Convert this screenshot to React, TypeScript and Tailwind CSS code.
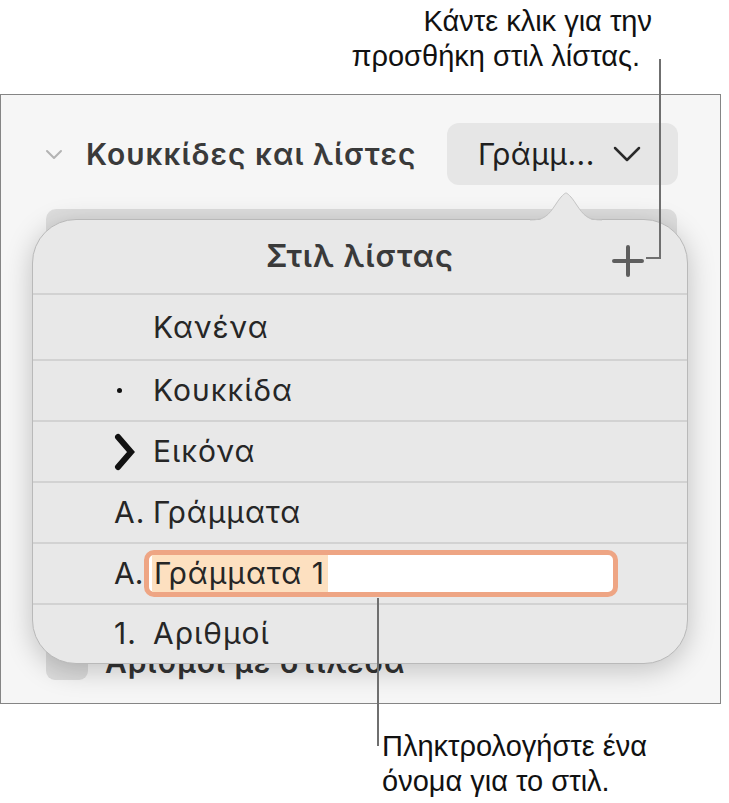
import React from 'react';

type ListStyle = {
  label: string;
  marker: React.ReactNode;
  height: string;
};

const ChevronMarker = () => (
  <svg width="22" height="38" viewBox="0 0 22 38" className="block">
    <path d="M4 4 L17 19 L4 34" fill="none" stroke="#111" strokeWidth="6" strokeLinejoin="miter" strokeLinecap="round" />
  </svg>
);

const rows: ListStyle[] = [
  { label: 'Κανένα', marker: null, height: 'h-[66px]' },
  { label: 'Κουκκίδα', marker: <span className="ml-[3px] block h-[5px] w-[5px] rounded-full bg-[#111]" />, height: 'h-[61px]' },
  { label: 'Εικόνα', marker: <ChevronMarker />, height: 'h-[61px]' },
  { label: 'Γράμματα', marker: <span>Α.</span>, height: 'h-[61px]' },
];

const ListStylePopover = () => (
  <div className="absolute left-[32px] top-[219px] w-[656px] h-[445px] rounded-[44px] border border-[#b9b9b9] bg-[#e8e8e8] shadow-[0_6px_28px_rgba(0,0,0,0.22)] font-['Inter',sans-serif] text-[30px] tracking-[1px] text-[#262626]">
    {/* pointer towards the style button */}
    <svg width="72" height="30" viewBox="0 0 72 30" className="absolute left-[497px] -top-[28px]">
      <path d="M0 29 C14 29 18 24 26 12 C31 4 35 1 36 1 C37 1 41 4 46 12 C54 24 58 29 72 29 Z" fill="#e8e8e8" />
      <path d="M0 28 C14 28 18 24 26 12 C31 4 35 1 36 1 C37 1 41 4 46 12 C54 24 58 28 72 28" fill="none" stroke="#c4c4c4" strokeWidth="1" />
    </svg>

    <div className="relative h-[75px] flex items-center justify-center border-b-2 border-[#d2d2d2]">
      <span className="text-[31px] font-semibold text-[#3a3a3a]">Στιλ λίστας</span>
      <svg width="34" height="34" viewBox="0 0 34 34" className="absolute right-[42px] top-[24px]">
        <path d="M17 3 V31 M3 17 H31" stroke="#5e5e5e" strokeWidth="4" strokeLinecap="round" />
      </svg>
    </div>

    {rows.map((row) => (
      <div key={row.label} className={`${row.height} flex items-center pl-[81px] border-b-2 border-[#d2d2d2]`}>
        <div className="w-[39px] flex items-center">{row.marker}</div>
        <span>{row.label}</span>
      </div>
    ))}

    {/* rename field for the new style */}
    <div className="h-[61px] flex items-center pl-[81px] border-b-2 border-[#d2d2d2]">
      <span className="w-[30px] tracking-normal">Α.</span>
      <div className="w-[474px] h-[47px] rounded-[10px] border-[5px] border-[#eea584] bg-white flex items-center pl-[3px]">
        <span className="bg-[#fde0c0] leading-[37px] pl-[2px] pr-[3px]">Γράμματα 1</span>
      </div>
    </div>

    <div className="h-[57px] flex items-center pl-[81px]">
      <span className="w-[39px]">1.</span>
      <span>Αριθμοί</span>
    </div>
  </div>
);

const App: React.FC = () => {
  return (
    <div className="relative w-[729px] h-[803px] overflow-hidden bg-white">
      <div className="h-[94px] pt-[4px] text-right font-['Liberation_Sans',Arial,sans-serif] text-[29px] leading-[35px] text-[#111]">
        <p className="pr-[77px]">Κάντε κλικ για την</p>
        <p className="pr-[89px]">προσθήκη στιλ λίστας.</p>
      </div>

      <div className="w-[721px] h-[610px] border border-[#858585] bg-[#f6f6f6] font-['Inter',sans-serif]">
        <div className="flex items-center pt-[28px]">
          <svg width="18" height="11" viewBox="0 0 18 11" className="ml-[44px]">
            <path d="M2 2 L9 9 L16 2" fill="none" stroke="#b3b3b3" strokeWidth="2" strokeLinecap="round" strokeLinejoin="round" />
          </svg>
          <span className="ml-[23px] text-[30px] tracking-[1px] font-semibold text-[#3a3a3a]">Κουκκίδες και λίστες</span>
          <div className="ml-auto mr-[42px] w-[231px] h-[62px] rounded-[12px] bg-[#e6e6e6] flex items-center pl-[31px] pr-[37px] text-[30px] tracking-[0.5px] text-[#1f1f1f]">
            <span>Γράμμ...</span>
            <svg width="28" height="16" viewBox="0 0 28 16" className="ml-auto">
              <path d="M2 2 L14 14 L26 2" fill="none" stroke="#2a2a2a" strokeWidth="2.5" strokeLinecap="round" strokeLinejoin="round" />
            </svg>
          </div>
        </div>

        <div className="mt-[24px] ml-[45px] mr-[43px] h-[44px] rounded-[10px] bg-[#dedede]" />

        <div className="mt-[387px] ml-[45px] flex items-center h-[40px]">
          <div className="w-[42px] h-[40px] rounded-[9px] bg-[#dcdcdc]" />
          <span className="ml-[17px] mt-[5px] text-[30px] tracking-[1px] font-semibold text-[#333]">Αριθμοί με στιλέσα</span>
        </div>
      </div>

      <ListStylePopover />

      {/* callout leaders */}
      <div className="absolute left-[659px] top-[59px] w-[2px] h-[200px] bg-[#6f6f6f]" />
      <div className="absolute left-[646px] top-[257px] w-[14px] h-[2px] bg-[#6f6f6f]" />
      <div className="absolute left-[377px] top-[598px] w-[2px] h-[148px] bg-[#6f6f6f]" />

      <div className="absolute left-[382px] top-[729px] font-['Liberation_Sans',Arial,sans-serif] text-[29px] leading-[35px] text-[#111]">
        <p>Πληκτρολογήστε ένα</p>
        <p>όνομα για το στιλ.</p>
      </div>
    </div>
  );
};

export default App;
